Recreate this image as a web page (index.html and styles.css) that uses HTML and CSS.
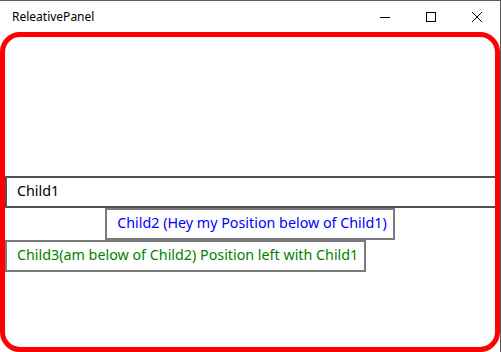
FILE: index.html
```html
<!DOCTYPE html>
<html>
<head>
<meta name="viewport" content="width=device-width, initial-scale=1">
<link rel="stylesheet" href="styles.css">
</head>
<body>

<div class="window">
  <div class="titlebar">
    <span class="title">ReleativePanel</span>
    <div class="controls">
      <span class="ctl">
        <svg width="10" height="10" viewBox="0 0 10 10"><line x1="0" y1="5.5" x2="10" y2="5.5" stroke="#000" stroke-width="1"/></svg>
      </span>
      <span class="ctl">
        <svg width="10" height="10" viewBox="0 0 10 10"><rect x="0.5" y="0.5" width="9" height="9" fill="none" stroke="#000" stroke-width="1"/></svg>
      </span>
      <span class="ctl">
        <svg width="10" height="10" viewBox="0 0 10 10"><path d="M0 0 L10 10 M10 0 L0 10" stroke="#000" stroke-width="1"/></svg>
      </span>
    </div>
  </div>

  <div class="panel">
    <div class="top"></div>
    <div class="field child1">Child1</div>
    <div class="below">
      <div class="field child2">Child2 (Hey my Position below of Child1)</div>
      <div class="field child3">Child3(am below of Child2) Position left with Child1</div>
    </div>
  </div>
</div>

</body>
</html>
```

FILE: styles.css
```css
* {
    box-sizing: border-box;
}

body {
    margin: 0;
    background-color: white;
    font-family: "Noto Sans", "Open Sans", sans-serif;
}

.window {
    width: 501px;
    height: 352px;
    border-top: 1px solid #5a5a5a;
    border-right: 1px solid #5a5a5a;
    background: white;
}

.titlebar {
    height: 31px;
    display: flex;
    align-items: center;
    justify-content: space-between;
}

.title {
    padding-left: 12px;
    font-size: 12px;
    color: #000;
}

.controls {
    display: flex;
    height: 100%;
}

.ctl {
    width: 46px;
    display: flex;
    align-items: center;
    justify-content: center;
}

.ctl svg {
    display: block;
}

.panel {
    width: 500px;
    height: 320px;
    border: 5px solid red;
    border-radius: 20px;
    display: grid;
    grid-template-rows: 1fr auto 1fr;
    overflow: hidden;
}

.field {
    font-size: 14.3px;
    line-height: 20px;
    padding: 3px 6px 5px 10px;
    border: 2px solid #7a7a7a;
    white-space: nowrap;
    background: white;
}

.child1 {
    margin-right: -2px;
    border-color: #4f4f4f;
    color: #000;
}

.below {
    display: flex;
    flex-direction: column;
    align-items: flex-start;
}

.child2 {
    align-self: center;
    color: #0000ff;
}

.child3 {
    color: #008000;
}
```
